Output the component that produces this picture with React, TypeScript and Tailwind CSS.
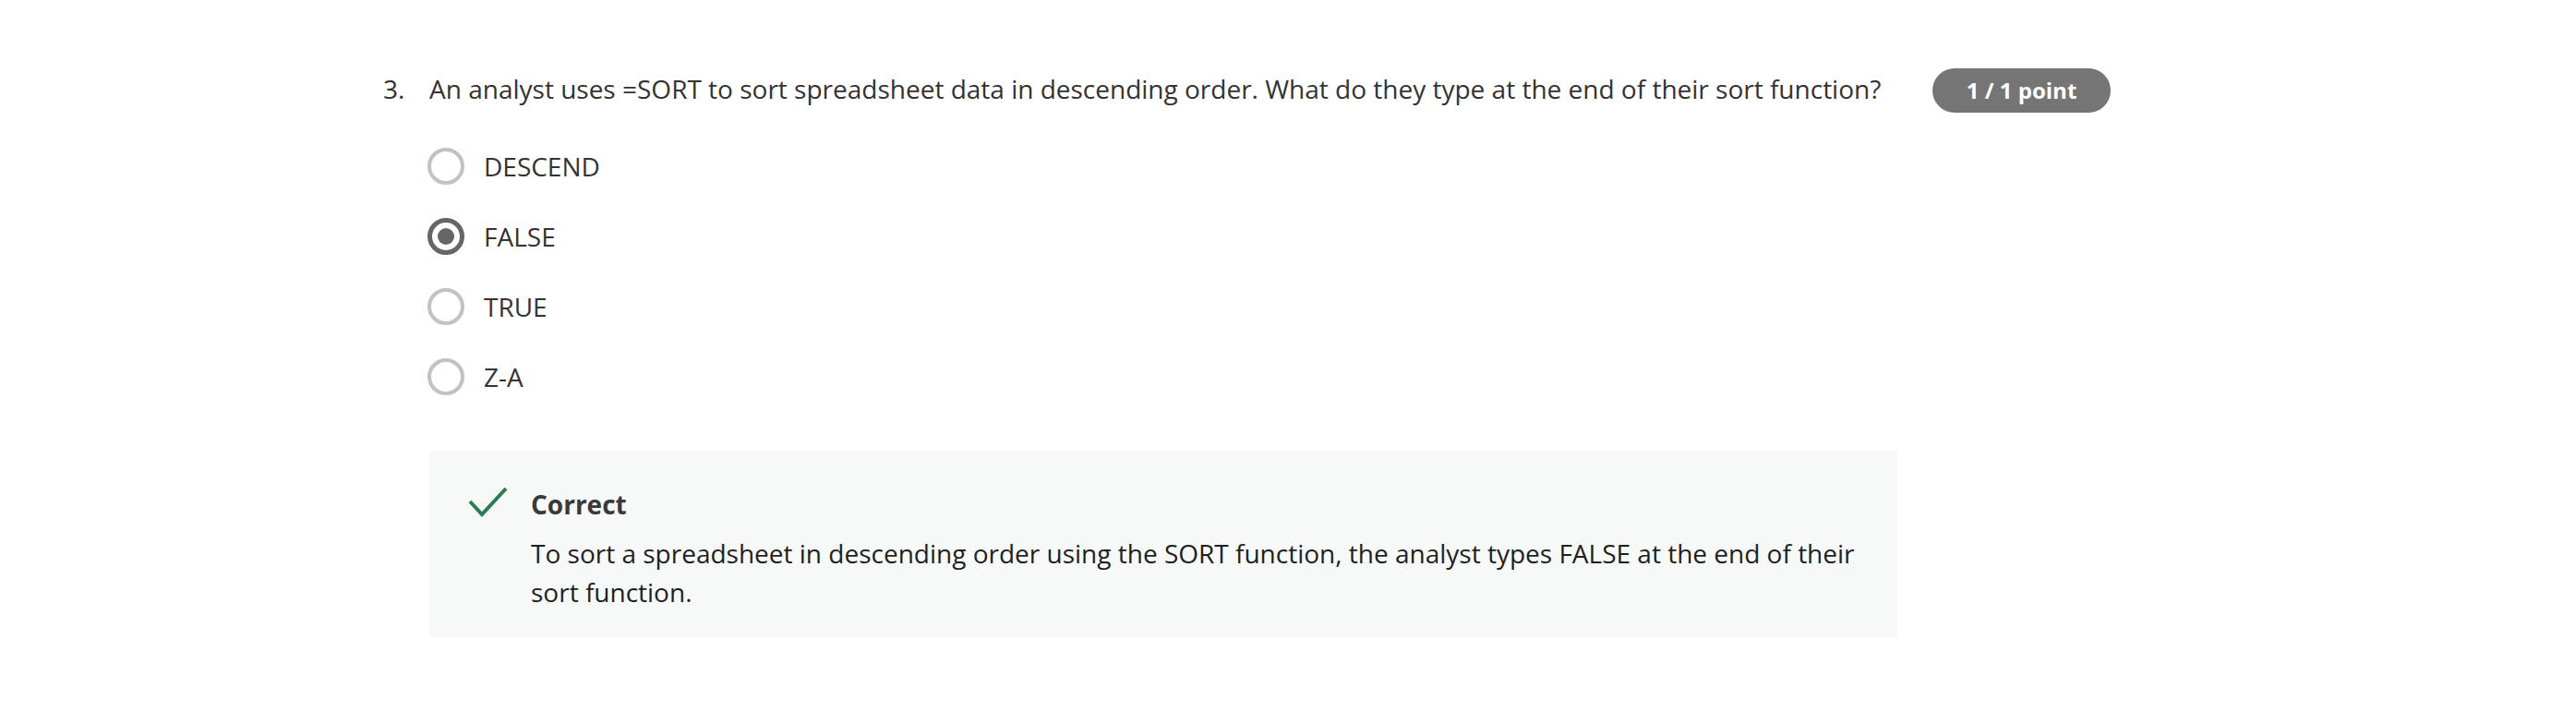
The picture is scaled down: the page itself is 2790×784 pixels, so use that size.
import React from "react";

const OPTIONS = ["DESCEND", "FALSE", "TRUE", "Z-A"];
const SELECTED = "FALSE";

const Radio: React.FC<{ checked: boolean }> = ({ checked }) =>
  checked ? (
    <span className="w-[40px] h-[40px] rounded-full border-[5px] border-[#666666] flex items-center justify-center shrink-0">
      <span className="w-[18px] h-[18px] rounded-full bg-[#666666]" />
    </span>
  ) : (
    <span className="w-[40px] h-[40px] rounded-full border-[4px] border-[#c2c2c2] shrink-0" />
  );

export default function App() {
  return (
    <div
      className="min-h-screen bg-white pl-[415px] pt-[75px] text-[#333333]"
      style={{ fontFamily: '"Open Sans", "Liberation Sans", sans-serif' }}
    >
      <div className="flex items-start">
        {/* number */}
        <div className="w-[50px] shrink-0 text-[28px] leading-[42px]">3.</div>

        {/* question body */}
        <div className="w-[1590px] shrink-0">
          <p className="text-[28px] leading-[42px]">
            An analyst uses =SORT to sort spreadsheet data in descending order. What do they
            type at the end of their sort function?
          </p>

          <div className="mt-[25px] flex flex-col">
            {OPTIONS.map((opt) => (
              <label key={opt} className="flex items-center gap-[21px] h-[76px] -ml-[2px]">
                <Radio checked={opt === SELECTED} />
                <span className="text-[28px] leading-[42px]">{opt}</span>
              </label>
            ))}
          </div>

          {/* feedback */}
          <div className="mt-[42px] bg-[#f7f8f8] pl-[42px] pr-[30px] pt-[37px] pb-[28px] flex gap-[24px]">
            <svg width="44" height="36" viewBox="0 0 44 36" className="shrink-0 mt-[1px]">
              <path
                d="M2 17 L15 31 L41 3"
                fill="none"
                stroke="#2f7a52"
                strokeWidth="4"
              />
            </svg>
            <div className="flex-1">
              <div className="text-[28px] leading-[42px] font-bold text-[#373a3c]">Correct</div>
              <p className="mt-[11px] text-[28px] leading-[42px] text-[#1f1f1f]">
                To sort a spreadsheet in descending order using the SORT function, the analyst
                types FALSE at the end of their sort function.
              </p>
            </div>
          </div>
        </div>

        {/* points badge */}
        <div className="ml-[38px] -mt-[1px] h-[48px] w-[193px] shrink-0 rounded-full bg-[#757575] text-white font-bold text-[24px] flex items-center justify-center">
          1 / 1 point
        </div>
      </div>
    </div>
  );
}
